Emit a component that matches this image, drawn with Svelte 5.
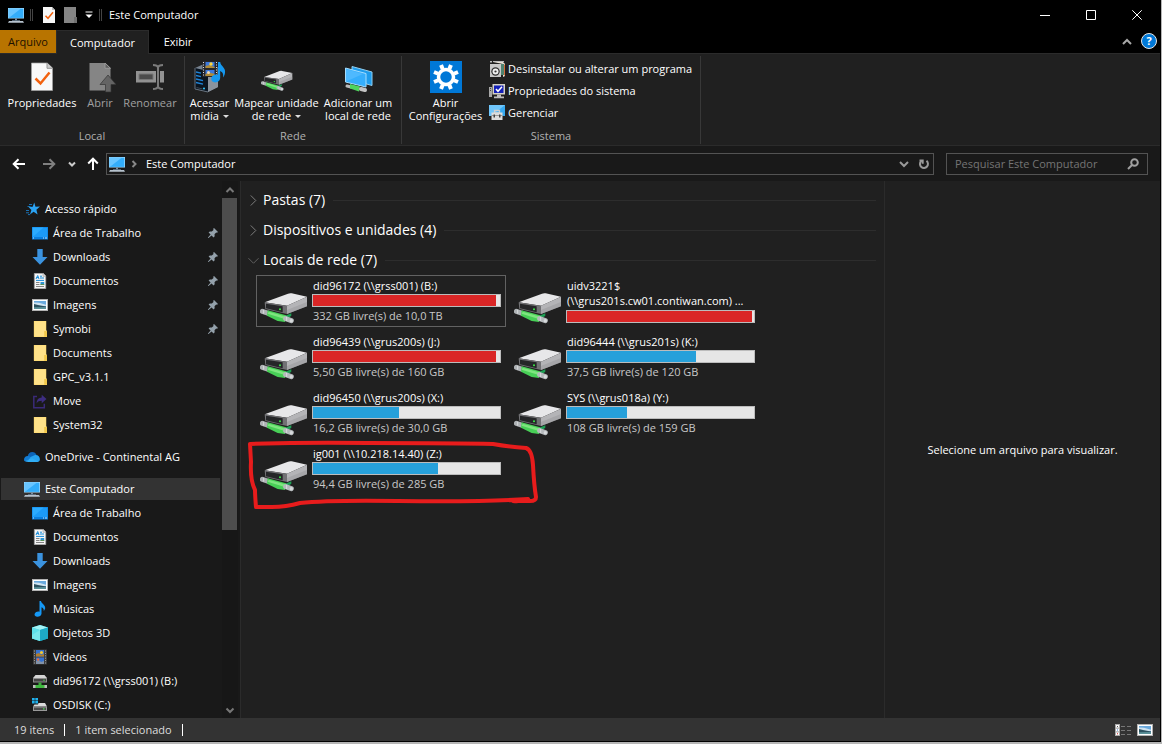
<script>
  const quick = [
    ['desktop', 'Área de Trabalho', true],
    ['download', 'Downloads', true],
    ['document', 'Documentos', true],
    ['image', 'Imagens', true],
    ['folder', 'Symobi', true],
    ['folder', 'Documents', false],
    ['folder', 'GPC_v3.1.1', false],
    ['move', 'Move', false],
    ['folder', 'System32', false],
  ];
  const computer = [
    ['desktop', 'Área de Trabalho'],
    ['document', 'Documentos'],
    ['download', 'Downloads'],
    ['image', 'Imagens'],
    ['music', 'Músicas'],
    ['cube', 'Objetos 3D'],
    ['video', 'Vídeos'],
    ['netdrive', 'did96172 (\\\\grss001) (B:)'],
    ['osdrive', 'OSDISK (C:)'],
  ];
  const drives = [
    { name: 'did96172 (\\\\grss001) (B:)', free: '332 GB livre(s) de 10,0 TB', used: 98, full: true, selected: true },
    { name: 'uidv3221$', path: '(\\\\grus201s.cw01.contiwan.com) ...', used: 99, full: true },
    { name: 'did96439 (\\\\grus200s) (J:)', free: '5,50 GB livre(s) de 160 GB', used: 98, full: true },
    { name: 'did96444 (\\\\grus201s) (K:)', free: '37,5 GB livre(s) de 120 GB', used: 69 },
    { name: 'did96450 (\\\\grus200s) (X:)', free: '16,2 GB livre(s) de 30,0 GB', used: 46 },
    { name: 'SYS (\\\\grus018a) (Y:)', free: '108 GB livre(s) de 159 GB', used: 32 },
    { name: 'ig001 (\\\\10.218.14.40) (Z:)', free: '94,4 GB livre(s) de 285 GB', used: 67, marked: true },
  ];
</script>

{#snippet icon(name)}
  <svg class="ico" viewBox="0 0 16 16" aria-hidden="true">
    {#if name === 'pc'}
      <rect x="0" y="1" width="16" height="10.5" fill="#9fdcff" />
      <rect x=".7" y="1.7" width="14.6" height="9.2" fill="#33adfa" />
      <path d="M.7 10.9V1.7h12z" fill="#68c5ff" />
      <path d="M7 11.5h2v2H7z" fill="#7d8fa0" /><path d="M4 13h8v.8H4z" fill="#64798c" />
      <path d="M1 14h14l1 1.8H0z" fill="#b7c3ce" />
    {:else if name === 'star'}
      <path d="M10.200 1.500l1.300 4.300 4.500-.2-3.600 3.100 1.200 4.900-4-2.800-3.600 2.800 1.400-4.700-2.800-2.800 4.100-.3z" fill="#2ba3f3" />
      <path d="M5 3.500h3M3.500 5.500h3M2 9.500h3M2 11.800h3M4 13.600h2" stroke="#1c7cc4" stroke-width=".9" />
    {:else if name === 'desktop'}
      <rect x="0" y="2" width="16" height="12.5" fill="#0a7fe0" />
      <rect x=".6" y="2.6" width="14.8" height="9.4" fill="#1c9bf8" />
      <path d="M.6 12V2.6h11z" fill="#2cabff" />
      <path d="M1 13h1M11 13h1M13 13h2" stroke="#d9f1ff" stroke-width=".9" />
    {:else if name === 'download'}
      <path d="M5.3 0h5.4v8H15.5L8 15.8.5 8h4.8z" fill="#3b93df" />
    {:else if name === 'document'}
      <path d="M2.3.3h8.9l2.6 2.8v12.6H2.3z" fill="#f5f5f5" stroke="#979797" stroke-width=".7" />
      <path d="M11 .3v3h3" fill="#ddd" stroke="#979797" stroke-width=".6" />
      <path d="M4 6l1.7-3.5L7 6M4.4 4.6h2.2M8 3.2h2M8 5h4M4 7.4h8" stroke="#178bd8" fill="none" />
      <path d="M4 9.5h3.5M4 11.5h3.5M4 13.5h8" stroke="#666" stroke-width=".8" />
      <path d="M8.5 9h3.7v3H8.5z" fill="#2d94d2" /><path d="M8.5 11h3.7v1H8.5z" fill="#5c9254" />
    {:else if name === 'image'}
      <path d="M0 2h16v12H0z" fill="#b2b2b2" /><path d="M1 3h14v10H1z" fill="#fff" />
      <path d="M2 4h12v8H2z" fill="#6aa9dd" /><path d="M2 5.5l5 .2 7 2V9H2z" fill="#cfe3f1" />
      <path d="M2 7l4 1 8 1.5V12H2z" fill="#2d5361" /><path d="M2 10.2l12-.3V12H2z" fill="#5b9199" />
    {:else if name === 'folder'}
      <path d="M2 0h12v9.5h1V16H2z" fill="#ffe289" /><path d="M12.2 10H15v6h-2.8z" fill="#f1c84b" />
      <path d="M2 0h12v9.5M2.2 0v15.7H15" fill="none" stroke="#ffd560" stroke-width=".5" />
    {:else if name === 'move'}
      <path d="M5 3.5H1.8v11.2h10.5v-4" fill="none" stroke="#3a2a78" stroke-width="1.5" />
      <path d="M4.5 10.5c.2-4 2-6 5.2-6V1.7L14.5 6l-4.8 4.3V7.7c-2.5 0-4 .7-5.2 2.8z" fill="#3d2d80" />
    {:else if name === 'cloud'}
      <path d="M3.6 8C3.8 4.8 6 3 8.3 3c2 0 3.5 1.2 4.2 3L9 9z" fill="#0d65b8" />
      <path d="M0 11c0-2.5 1.5-4 3.8-4 1.1 0 1.7.3 2.5.8l4.2 4.9H3C1 12.7 0 12 0 11z" fill="#127bd2" />
      <path d="M6.5 8l4-1.8c3-.9 5.5 1.5 5.4 4 0 1.7-1 2.7-2.7 2.7H3.5z" fill="#27a4f0" />
      <path d="M1 12l7-2.8 6.5 3.3-1.3.4H3z" fill="#38b5f8" opacity=".6" />
    {:else if name === 'music'}
      <path d="M7.500 0h1.500c.3 2.600 4.500 4 4.200 7.200-.2 1.100-.9 2.200-1.500 2.900.5-2.100-.7-3.300-2.200-3.900v6.600C9.300 15 7 16 5 15.800 2.800 15.500 2.100 13.900 2.800 12.500c.8-1.600 2.700-2.400 4.700-1.800z" fill="#1598f5" />
    {:else if name === 'cube'}
      <path d="M8 0l8 2.5v11L8 16l-8-2.500v-11z" fill="#22b8d0" />
      <path d="M0 2.500L8 5v11l-8-2.500z" fill="#5ee0ea" /><path d="M8 0l8 2.500L8 5 0 2.500z" fill="#a4f3f5" />
      <path d="M8 5l8-2.500v11L8 16z" fill="#1daac7" /><path d="M0 10l8-5v11l-8-2.500z" fill="#8bebef" opacity=".6" />
    {:else if name === 'video'}
      <path d="M1 .5h14v15H1z" fill="#3d3d3d" /><path d="M4 1h8v6.600H4zM4 8.400h8V15H4z" fill="#3672d0" />
      <path d="M4 5l3-1 2 2 3-1v2.600H4z" fill="#b27d2b" /><path d="M4 12l3-1 2 2 3-1v3H4z" fill="#8292a8" />
      <circle cx="9.500" cy="3.500" r="1.600" fill="#f2c933" /><circle cx="6" cy="10.500" r="1.300" fill="#e46e42" />
      <path d="M2.500 1.500v13M13.500 1.500v13" stroke="#a4a4a4" stroke-width="1" stroke-dasharray="1 1.400" />
    {:else if name === 'netdrive'}
      <path d="M3.500 2h9L15 5H1z" fill="#d5d5d5" /><path d="M1 5h14v4.500H1z" fill="#8e8e8e" /><path d="M2 6h12v2.500H2z" fill="#444" />
      <circle cx="12" cy="7.200" r=".7" fill="#4ae250" />
      <path d="M6.500 9.500h3v2.500h-3z" fill="#3aac3a" /><path d="M3 12h10v3H3z" fill="#3fb83f" />
      <path d="M1 12h2.500v3H1zM12.500 12H15v3h-2.500z" fill="#bbb" />
    {:else if name === 'osdrive'}
      <path d="M0 1h2.700v2.500H0zM3.300 1H6v2.500H3.300zM0 4.100h2.700v2.500H0zM3.300 4.100H6v2.500H3.300z" fill="#20b1ed" />
      <path d="M6.500 6H13l2 3.500H1L2.500 7.500h3.500z" fill="#dadada" /><path d="M1 9.500h14V14H1z" fill="#999" />
      <path d="M2 10.500h12V13H2z" fill="#4a4a4a" /><path d="M11 11.200h1.500v1.200H11z" fill="#4be051" />
    {:else if name === 'props'}
      <path d="M2 0h9l3 3v13H2z" fill="#f7f7f7" /><path d="M11 0v3h3" fill="#bbb" />
      <path d="M4.500 8.800l2.500 2.500 5-6" stroke="#f2600c" stroke-width="1.500" fill="none" />
    {:else if name === 'uninstall'}
      <path d="M1 0h2v1.500H1zM4 0h11v1H4z" fill="#bcbcbc" /><path d="M4 1h10l2 2v12l-2 1V3z" fill="#e9e3d8" />
      <path d="M12 3h3v11h-3z" fill="#4e8471" /><path d="M15 3l1 1v11l-1-1z" fill="#d56b39" />
      <path d="M1 3h11v13H1z" fill="#c9c9c9" /><circle cx="6.500" cy="10.500" r="4.200" fill="#2e2e2e" />
      <circle cx="6.500" cy="10.500" r="3" fill="#f1f1f1" /><circle cx="6.500" cy="10.500" r="1.100" fill="#333" />
    {:else if name === 'system'}
      <path d="M3.500 1H16v10.500H3.500z" fill="#d4d1c5" /><path d="M5 2.500h9.500v7.500H5z" fill="#1420b8" />
      <path d="M7 6l2 2.300 4-4.500" stroke="#fff" stroke-width="1.500" fill="none" />
      <path d="M0 4h3v10H0z" fill="#a7a7a7" /><path d="M1 5.500h1M1 7.500h1" stroke="#444" />
      <path d="M8 11.500h4v2H8zM5 13.500h10v1.800H5z" fill="#bdbdbd" />
    {:else if name === 'manage'}
      <path d="M0 0h16v11H0z" fill="#37aaf2" /><path d="M0 0h16L2 11H0z" fill="#70c6fb" />
      <path d="M5.500 5.500h5V8h-5z" fill="none" stroke="#d0d0d0" stroke-width="1.300" /><path d="M2.500 7.500h11V15h-11z" fill="#ddd" />
      <path d="M2.500 10h11v1h-11z" fill="#999" /><path d="M4.500 9.500H6v3H4.500zM10 9.500h1.500v3H10z" fill="#444" />
    {/if}
  </svg>
{/snippet}

{#snippet drive(kind)}
  <svg class={kind} viewBox="0 0 144 99" aria-hidden="true">
    <path d="M14 31L84 5q5-2 11-1l46 10-60 27z" fill="#e7e7e9" />
    <path d="M141 14v29L81 66V41z" fill="#b4b4b7" /><path d="M141 30v13L81 66V54z" fill="#97979b" opacity=".5" />
    <path d="M14 31l67 10v25l-65-15z" fill="#717174" /><path d="M18 35l50 8v18l-50-12z" fill="#252628" />
    <circle cx="60" cy="52" r="3" fill="#3cec48" />
    <path d="M68 74l26-10v7l-20 15z" fill="#1d9f54" />
    <path d="M7 58l18 6" stroke="#aeb2b5" stroke-width="15" stroke-linecap="round" />
    <path d="M23 55l55 15-3 20-22-3-32-16z" fill="#48cf57" /><path d="M26 59l49 14-1 8-51-16z" fill="#7ee57f" />
    <path d="M77 80l17 6" stroke="#b5b9bc" stroke-width="15" stroke-linecap="round" />
    <path d="M80 74v13M11 53v12" stroke="#d9dcde" stroke-width="3" /><circle cx="94" cy="86" r="5" fill="#d7dadc" />
  </svg>
{/snippet}

{#snippet chevron(cls, d)}
  <svg class={cls} viewBox="0 0 12 12" aria-hidden="true"><path {d} /></svg>
{/snippet}

<div class="page">
  <div class="window">
    <header class="title">
      {@render icon('pc')}
      <i class="bar"></i>
      <button aria-label="Propriedades">{@render icon('props')}</button>
      <button aria-label="Nova pasta"><svg class="ico" viewBox="0 0 16 16"><path d="M1 0h12v10h1v6H1z" fill="#858585" /><path d="M11 10h3v6h-3z" fill="#707070" /></svg></button>
      <button class="custom" aria-label="Personalizar"><svg viewBox="0 0 8 8"><path d="M.5 1h7" stroke="#fff" /><path d="M.5 3.500h7L4 7z" fill="#fff" /></svg></button>
      <i class="bar"></i>
      <h1>Este Computador</h1>
      <div class="controls">
        <button aria-label="Minimizar"><svg viewBox="0 0 10 10"><path d="M0 5.500h10" /></svg></button>
        <button aria-label="Maximizar"><svg viewBox="0 0 10 10"><path d="M.5.5h9v9h-9z" /></svg></button>
        <button aria-label="Fechar"><svg viewBox="0 0 10 10"><path d="M.3.3l9.400 9.400M9.700.3L.3 9.700" /></svg></button>
      </div>
    </header>

    <div class="tabs">
      <button class="file">Arquivo</button>
      <button class="active">Computador</button>
      <button class="view">Exibir</button>
      <span class="grow"></span>
      <button class="fold" aria-label="Recolher faixa">{@render chevron('chev', 'M2 8l4-4 4 4')}</button>
      <button class="help" aria-label="Ajuda">?</button>
    </div>

    <div class="ribbon">
      <section class="local">
        <div class="tools">
          <button class="w68">
            <svg class="big" viewBox="0 0 32 32"><path d="M5.500 2h15.700l5.300 5v22.500h-21z" fill="#f8f8f8" stroke="#a2a2a2" stroke-width=".7" /><path d="M21 2v5.300h5.500" fill="#ccc" stroke="#949494" /><path d="M9.500 17.500l5 5 9-11" fill="none" stroke="#f2610e" stroke-width="2.500" /></svg>
            <span>Propriedades</span>
          </button>
          <button class="w26 off">
            <svg class="big" viewBox="0 0 32 32"><path d="M5.500 2h15.700l5.300 5v22.500h-21z" fill="#858585" /><path d="M21 2v5.300h5.500z" fill="#606060" stroke="#9a9a9a" /><path d="M24 14l8 9.500h-5V31h-5.500v-7.500H16z" fill="#646464" stroke="#333" stroke-width=".7" /></svg>
            <span>Abrir</span>
          </button>
          <button class="w52 off">
            <svg class="big" viewBox="0 0 32 32"><path d="M2 10h28v11.500H2z" fill="#929292" /><path d="M5 13h14v5.500H5z" fill="#4b4b4b" stroke="#777" /><path d="M18.500 4c3 0 5 .5 5.500 2.500C24.500 4.500 26.500 4 29 4M18.500 28c3 0 5-.5 5.500-2.500.5 2 2.500 2.500 5 2.500M24 6v20" fill="none" stroke="#222" stroke-width="4" /><path d="M19 4c3 0 4.500.5 5 2.500C24.500 4.500 26.500 4 29 4M19 28c3 0 4.500-.5 5-2.500.5 2 2.500 2.500 5 2.500M24 6v20" fill="none" stroke="#7b7b7b" stroke-width="2" /></svg>
            <span>Renomear</span>
          </button>
        </div>
        <h2>Local</h2>
      </section>
      <section class="rede">
        <div class="tools">
          <button class="w39">
            <svg class="big" viewBox="0 0 32 32"><path d="M1 7l9-4 14 3v20l-10 5L1 28z" fill="#77828f" /><path d="M1 7l13 3v21L1 28z" fill="#0b1520" /><path d="M14 10l10-4v20l-10 5z" fill="#8b939d" /><path d="M1 7v21l13 3" stroke="#66717c" /><path d="M2 11l5 1.200M2 14.500l5 1.200M2 18l7 1.700M2 21.500l7 1.700" stroke="#1f84d8" stroke-width="1.300" /><path d="M2.500 26.500l6 1.500" stroke="#3a4654" /><circle cx="10" cy="27.500" r="1" fill="#34caff" /><path d="M8.500 0h15v16h-15z" fill="#26262a" /><path d="M11.500 1h9v6h-9zM11.500 9h9v6h-9z" fill="#3c78dc" /><path d="M11.500 5l4-1 5 2v1h-9zM11.500 13l4-1.500 5 1.500v2h-9z" fill="#b08a36" /><circle cx="17" cy="3" r="1.700" fill="#ffd83b" /><circle cx="14.500" cy="11.500" r="1.500" fill="#f0d8b0" /><path d="M9.500 1v15M22.500 1v15" stroke="#ddd" stroke-dasharray="1 1.500" /><path d="M24 1h2.200c.3 4 5.800 5.500 4.800 11-.3 2-1.300 3.500-2 4.500.7-4-.5-5.500-2.800-6.500v6.500c0 3.500-3 5.300-6 4.800-4-.8-4-6.800.5-7.600 1-.2 2.300-.1 3.300.2z" fill="#1598ef" /></svg>
            <span>Acessar<br />mídia<b class="caret"></b></span>
          </button>
          <button class="w85">
            <span class="big holder">{@render drive('small-drive')}</span>
            <span>Mapear unidade<br />de rede<b class="caret"></b></span>
          </button>
          <button class="w68">
            <svg class="big" viewBox="0 0 32 32"><path d="M10 5.500l20 5.500v13.500L10 19z" fill="#1e9cec" stroke="#91ceef" /><path d="M3.500 7L24 12.500V26L3.500 21z" fill="#35aefc" stroke="#a3ddff" /><path d="M4 20.500V8l17 5z" fill="#68c4ff" opacity=".5" /><path d="M5 25l4 1" stroke="#bbb" stroke-width="3" stroke-linecap="round" /><path d="M8 23l10 2.500-1 5L8 27.500z" fill="#4fd45e" /><path d="M19 28l4 1" stroke="#c3c3c3" stroke-width="4" stroke-linecap="round" /></svg>
            <span>Adicionar um<br />local de rede</span>
          </button>
        </div>
        <h2>Rede</h2>
      </section>
      <section class="sistema">
        <div class="tools">
          <button class="w75">
            <svg class="big" viewBox="0 0 32 32"><path d="M0 0h32v32H0z" fill="#0078d7" /><circle cx="16" cy="16" r="7.500" fill="none" stroke="#fff" stroke-width="3.500" /><g stroke="#fff" stroke-width="4">
              {#each [22.5, 67.5, 112.5, 157.5, 202.5, 247.5, 292.5, 337.5] as a}<path d="M16 3v4.500" transform="rotate({a} 16 16)" />{/each}
            </g></svg>
            <span>Abrir<br />Configurações</span>
          </button>
          <div class="rows">
            <button>{@render icon('uninstall')}Desinstalar ou alterar um programa</button>
            <button>{@render icon('system')}Propriedades do sistema</button>
            <button>{@render icon('manage')}Gerenciar</button>
          </div>
        </div>
        <h2>Sistema</h2>
      </section>
    </div>

    <nav class="address">
      <button aria-label="Voltar"><svg class="arrow" viewBox="0 0 14 14"><path d="M13 7H2M6.500 2.200L1.700 7l4.800 4.800" /></svg></button>
      <button aria-label="Avançar"><svg class="arrow dim" viewBox="0 0 14 14"><path d="M1 7h11M7.500 2.200L12.300 7l-4.800 4.800" /></svg></button>
      <button class="recent" aria-label="Locais recentes"><svg viewBox="0 0 8 8"><path d="M1 2.500l3 3 3-3" /></svg></button>
      <button aria-label="Acima"><svg class="arrow" viewBox="0 0 14 14"><path d="M7 13V2M2.200 6.500L7 1.700l4.800 4.800" /></svg></button>
      <div class="path">
        {@render icon('pc')}
        {@render chevron('sep', 'M4.500 3l3 3-3 3')}
        <span>Este Computador</span>
        <button class="drop" aria-label="Locais anteriores">{@render chevron('chev', 'M2 4l4 4 4-4')}</button>
        <button aria-label="Atualizar"><svg class="chev" viewBox="0 0 12 12"><path d="M3 3.200a4 4 0 1 0 5.500-.4M1.500 2.500h3.200v3.200" /></svg></button>
      </div>
      <label class="search">
        <input type="text" aria-label="Pesquisar" placeholder="Pesquisar Este Computador" />
        <svg viewBox="0 0 12 12"><circle cx="7.500" cy="4.500" r="3.300" /><path d="M5 7L1 11" /></svg>
      </label>
    </nav>

    <main>
      <aside>
        <ul>
          <li class="root">{@render icon('star')}<span>Acesso rápido</span></li>
          {#each quick as [ic, text, pin]}
            <li>{@render icon(ic)}<span>{text}</span>
              {#if pin}<svg class="pin" viewBox="0 0 10 10"><path d="M6 0l4 4-1 .8-.8-.2-1.700 1.700.2 2L5.500 9.500 3.600 7.500.5 10H0v-.5L2.600 6.500.6 4.500 1.800 3.400l2 .2L5.500 1.900 5.200.8z" fill="#94a1ab" /></svg>{/if}
            </li>
          {/each}
          <li class="root gap">{@render icon('cloud')}<span>OneDrive - Continental AG</span></li>
          <li class="root gap current">{@render icon('pc')}<span>Este Computador</span></li>
          {#each computer as [ic, text]}
            <li>{@render icon(ic)}<span>{text}</span></li>
          {/each}
        </ul>
        <div class="scroll">
          <button aria-label="Rolar para cima">{@render chevron('tiny', 'M2.500 8L6 4.500 9.500 8')}</button>
          <div class="track"><div class="thumb"></div></div>
          <button aria-label="Rolar para baixo">{@render chevron('tiny', 'M2.500 4.500L6 8l3.500-3.500')}</button>
        </div>
      </aside>

      <div class="content">
        <h3>{@render chevron('exp', 'M3 .5L8.500 6 3 11.500')}Pastas (7)</h3>
        <h3>{@render chevron('exp', 'M3 .5L8.500 6 3 11.500')}Dispositivos e unidades (4)</h3>
        <h3>{@render chevron('exp open', 'M.5 3.500L6 9l5.500-5.500')}Locais de rede (7)</h3>
        <div class="grid">
          {#each drives as d}
            <div class="tile" class:selected={d.selected}>
              {@render drive('large-drive')}
              <div class="info">
                <div class="name">{d.name}</div>
                {#if d.path}<div class="name second">{d.path}</div>{/if}
                <div class="usage" class:full={d.full}><div style="width:{d.used}%"></div></div>
                {#if d.free}<div class="free">{d.free}</div>{/if}
              </div>
              {#if d.marked}
                <svg class="mark" viewBox="0 0 290 70" aria-hidden="true"><path d="M2 4Q60 2 120 3 210 3 245 4 262 7 278 8 284 10 285 25 286 45 288 57 288 61 282 61H265Q272 62 280 59 240 62 150 61 80 60 52 63 38 67 24 67L8 67Q7 55 7 50 2 40 3 22L2 4" /></svg>
              {/if}
            </div>
          {/each}
        </div>
      </div>
      <div class="preview">Selecione um arquivo para visualizar.</div>
    </main>

    <footer>
      <span>19 itens</span><i></i><span>1 item selecionado</span><i></i>
      <span class="grow"></span>
      <button aria-label="Detalhes"><svg class="ico" viewBox="0 0 16 16"><path d="M0 2h5v12H0z" fill="#aaa" /><path d="M1 3h3v2.500H1zM1 6.700h3v2.500H1zM1 10.500h3V13H1z" fill="#fff" /><path d="M2 4h1v1H2z" fill="#555" /><path d="M2 7.500h1v1H2z" fill="#3577cf" /><path d="M2 11.300h1v1H2z" fill="#c22" /><path d="M6 4.500h4M12 4.500h4M6 8.500h4M12 8.500h4M6 12.500h4M12 12.500h4" stroke="#777" /></svg></button>
      <button aria-label="Ícones grandes">{@render icon('image')}</button>
    </footer>
  </div>
</div>

<style>
  :global(body) { margin: 0; background: #b5b5b5; }
  * { box-sizing: border-box; }
  button { display: flex; align-items: center; justify-content: center; margin: 0; padding: 0; border: 0; background: none; color: inherit; font: inherit; }
  h1, h2, h3, ul { margin: 0; padding: 0; font-weight: 400; list-style: none; }
  svg { display: block; flex: none; fill: none; }
  .page { display: flex; min-height: 100vh; padding: 0 1px 2px 0; background: #b5b5b5; font: 11px/16px "Open Sans", sans-serif; color: #fff; }
  .window { display: flex; flex: 1; flex-direction: column; min-width: 0; border: solid #000; border-width: 0 1px 1px 0; background: #191919; }
  .ico { width: 16px; height: 16px; }
  .grow { flex: 1; }

  .title { display: flex; align-items: center; height: 30px; padding-left: 8px; background: #000; }
  .title .bar { width: 3px; height: 12px; margin: 0 8px 0 6px; border: solid #444; border-width: 0 1px; }
  .title button + button { margin-left: 6px; }
  .title .custom { width: 8px; }
  .title .custom svg { width: 8px; height: 8px; }
  .title .custom + .bar { margin-right: 7px; }
  h1 { font-size: 11px; }
  .controls { display: flex; margin-left: auto; }
  .controls button { width: 46px; height: 30px; }
  .title .controls button { margin: 0; }
  .controls svg { width: 10px; height: 10px; stroke: #fff; }

  .tabs { display: flex; height: 24px; padding-right: 3px; background: #000; border-bottom: 1px solid #2b2b2b; }
  .file { width: 56px; background: #b87400; color: #1c1200; }
  .active { width: 93px; margin-bottom: -1px; background: #202020; border: solid #2b2b2b; border-width: 1px 1px 0; }
  .view { width: 58px; }
  .chev { width: 12px; height: 12px; stroke: #a8a8a8; stroke-width: 2; }
  .fold { width: 20px; }
  .help { width: 16px; height: 16px; margin: 3px 0 0 4px; border: 1px solid #e5e5e5; border-radius: 50%; background: #0078d7; font-size: 11px; font-weight: 700; line-height: 14px; }

  .ribbon { display: flex; height: 92px; padding-top: 2px; background: #202020; border-bottom: 1px solid #2b2b2b; line-height: 13px; }
  section { display: flex; flex-direction: column; justify-content: space-between; height: 88px; border-right: 1px solid #383838; }
  .tools { display: flex; align-items: flex-start; padding-top: 5px; white-space: nowrap; }
  .tools > button { flex-direction: column; gap: 3px; }
  .local { width: 185px; }
  .local .tools { gap: 11px; padding-left: 8px; }
  .rede { width: 217px; }
  .rede .tools { gap: 5px; padding-left: 5px; }
  .sistema { width: 299px; }
  .sistema .tools { gap: 6px; padding-left: 6px; }
  .w26 { width: 26px; } .w39 { width: 39px; } .w52 { width: 52px; } .w68 { width: 68px; } .w75 { width: 75px; } .w85 { width: 85px; }
  .off { color: #a0a0a0; }
  .big { width: 32px; height: 32px; }
  .holder { display: flex; align-items: center; padding-top: 8px; }
  .small-drive { width: 32px; height: 22px; }
  .caret { display: inline-block; margin: 0 0 2px 4px; border: solid transparent; border-width: 3px 3px 0; border-top-color: #ddd; }
  h2 { font-size: 11px; line-height: 16px; text-align: center; color: #b0b0b0; }
  .rows { display: flex; flex-direction: column; }
  .rows button { justify-content: flex-start; gap: 3px; height: 22px; line-height: 14px; }
  .tools .rows { margin-top: -3px; }

  .address { display: flex; align-items: center; height: 35px; padding: 0 12px; }
  .arrow { width: 14px; height: 14px; stroke: #fff; stroke-width: 2; }
  .dim { stroke: #808080; }
  .address > button + button { margin-left: 16px; }
  .address > .recent { width: 8px; }
  .address > .recent + button { margin-left: 10px; }
  .recent svg { width: 8px; height: 8px; stroke: #ccc; stroke-width: 2; }
  .address > .recent { margin-left: 12px; }
  .path { display: flex; flex: 1; align-items: center; height: 22px; margin-left: 6px; padding: 0 3px 0 2px; border: 1px solid #535353; }
  .sep { width: 12px; height: 12px; margin: 0 6px 0 3px; stroke: #888; stroke-width: 2; }
  .path .drop { margin: 0 8px 0 auto; }
  .path .chev { stroke-width: 2; stroke: #999; }
  .search { display: flex; align-items: center; width: 202px; height: 22px; margin-left: 12px; padding: 0 8px; border: 1px solid #535353; }
  .search input { flex: 1; min-width: 0; padding: 0; border: 0; outline: 0; background: none; color: #fff; font: inherit; }
  .search input::placeholder { color: #757575; opacity: 1; }
  .search svg { width: 12px; height: 12px; stroke: #a0a0a0; stroke-width: 2; }

  main { display: flex; flex: 1; }
  aside { display: flex; width: 240px; padding-right: 2px; }
  aside ul { flex: 1; padding: 16px 2px 0 1px; }
  li { display: flex; align-items: center; gap: 5px; height: 24px; padding-left: 31px; white-space: nowrap; }
  .root { gap: 5px; padding-left: 23px; }
  .gap { margin-top: 8px; }
  .current { height: 22px; margin: 9px 0 1px; background: #333; }
  .pin { width: 10px; height: 10px; margin: 0 2px 0 auto; }
  .scroll { display: flex; flex-direction: column; width: 16px; background: #171717; }
  .scroll button { height: 17px; }
  .track { flex: 1; }
  .thumb { width: 15px; height: 66%; background: #4d4d4d; }
  .tiny { width: 12px; height: 12px; stroke: #777; stroke-width: 2; }
  .content { flex: 1; min-width: 0; padding: 4px 8px 0 7px; border-left: 1px solid #2b2b2b; background: #202020; }
  h3 { display: flex; align-items: center; height: 30px; gap: 4px; font-size: 14px; line-height: 20px; white-space: nowrap; }
  h3::after { content: ""; flex: 1; height: 1px; margin-left: 4px; background: #2d2d2d; }
  .exp { width: 11px; height: 11px; stroke: #858585; }
  .open { stroke: #666; }
  .grid { display: grid; grid-template-columns: repeat(2, 250px); gap: 4px; padding-left: 8px; }
  .tile { position: relative; display: flex; gap: 4px; height: 52px; padding: 2px 3px; border: 1px solid transparent; }
  .selected { border-color: #626262; }
  .large-drive { width: 48px; height: 33px; margin-top: 14px; }
  .info { width: 189px; line-height: 15px; white-space: nowrap; }
  .name, .free { padding-left: 1px; }
  .free { color: #c8c8c8; }
  .usage { height: 13px; margin: 1px 0; border: 1px solid #bcbcbc; background: #e6e6e6; }
  .usage div { height: 100%; background: #26a0da; }
  .second + .usage { margin-top: 2px; }
  .full div { background: #da2626; }
  .mark { position: absolute; top: -4px; left: -9px; width: 290px; height: 70px; fill: none; stroke: #e81c1c; stroke-width: 4; stroke-linecap: round; stroke-linejoin: round; }
  .preview { display: flex; align-items: center; justify-content: center; width: 276px; border-left: 1px solid #2b2b2b; background: #202020; }

  footer { display: flex; align-items: center; height: 23px; padding: 0 7px 0 14px; background: #333; color: #ddd; }
  footer i { width: 1px; height: 12px; margin: 0 10px; background: #fff; }
  footer button + button { margin-left: 6px; }
</style>
